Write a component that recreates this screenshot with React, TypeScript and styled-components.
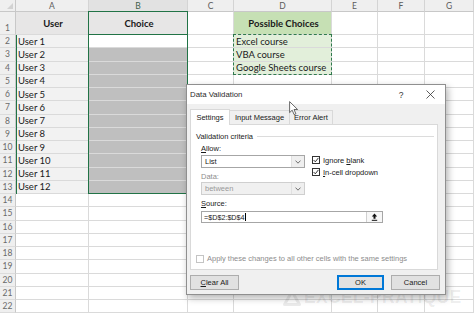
import React from "react";
import styled, { createGlobalStyle, css } from "styled-components";

const GlobalStyle = createGlobalStyle`
  html, body {
    margin: 0;
    padding: 0;
    background: #ffffff;
  }
  body {
    width: 474px;
    height: 316px;
    overflow: hidden;
  }
`;

const COLS = [16, 73, 99, 46, 98, 46, 47, 49];
const LETTERS = ["A", "B", "C", "D", "E", "F", "G"];
const ROW_H = 13.25;
const GRID_ROWS = `12px 23px repeat(21, ${ROW_H}px)`;
const GRID_COLS = COLS.map((c) => `${c}px`).join(" ");

const GREEN = "#217346";

const Screen = styled.div`
  position: relative;
  width: 474px;
  height: 316px;
  overflow: hidden;
  background: #fff;
`;

const SheetStack = styled.div`
  display: grid;
  width: 474px;
  height: 316px;

  & > * {
    grid-area: 1 / 1;
  }
`;

const SheetGrid = styled.div`
  display: grid;
  grid-template-columns: ${GRID_COLS};
  grid-template-rows: ${GRID_ROWS};
  font-family: Lato, "Liberation Sans", sans-serif;
  font-size: 9.5px;
  color: #1a1a1a;
`;

const OverlayGrid = styled.div`
  display: grid;
  grid-template-columns: ${GRID_COLS};
  grid-template-rows: ${GRID_ROWS};
  pointer-events: none;
`;

const Corner = styled.div`
  position: relative;
  background: #efefef;
  border-right: 1px solid #c8c8c8;
  border-bottom: 1px solid #c8c8c8;
  box-sizing: border-box;

  &::after {
    content: "";
    position: absolute;
    right: 2px;
    bottom: 2px;
    border-left: 6px solid transparent;
    border-bottom: 6px solid #d2d2d2;
  }
`;

const ColHead = styled.div<{ $selected?: boolean }>`
  display: flex;
  align-items: center;
  justify-content: center;
  box-sizing: border-box;
  background: ${(p) => (p.$selected ? "#e2e2e2" : "#efefef")};
  border-right: 1px solid #d4d4d4;
  border-bottom: 1px solid #c8c8c8;
  font-size: 8.5px;
  color: ${(p) => (p.$selected ? "#3f5f4a" : "#5c5c5c")};
`;

const RowHead = styled.div<{ $tall?: boolean }>`
  display: flex;
  align-items: ${(p) => (p.$tall ? "flex-end" : "center")};
  justify-content: center;
  box-sizing: border-box;
  padding-bottom: ${(p) => (p.$tall ? "1px" : "0")};
  background: #efefef;
  border-right: 1px solid #c8c8c8;
  border-bottom: 1px solid #dcdcdc;
  font-size: 8.5px;
  color: #6a6a6a;
`;

const Cell = styled.div<{ $bg?: string; $bold?: boolean; $center?: boolean }>`
  display: flex;
  align-items: center;
  justify-content: ${(p) => (p.$center ? "center" : "flex-start")};
  box-sizing: border-box;
  padding-left: 2px;
  background: ${(p) => p.$bg || "#ffffff"};
  border-right: 1px solid #dadada;
  border-bottom: 1px solid #dadada;
  font-weight: ${(p) => (p.$bold ? 700 : 400)};
  white-space: nowrap;
  overflow: hidden;
`;

const Mark = styled.div<{ $col: string; $row: string }>`
  grid-column: ${(p) => p.$col};
  grid-row: ${(p) => p.$row};
  box-sizing: border-box;
`;

const SelectionBox = styled(Mark)`
  border: 1.5px solid ${GREEN};
  margin: -1px 0 0 -1px;
`;

const HeaderRule = styled(Mark)`
  border-bottom: 1px solid ${GREEN};
`;

const RowHeadRule = styled(Mark)`
  border-right: 1.5px solid ${GREEN};
  margin-right: -1px;
`;

const ColHeadRule = styled(Mark)`
  border-bottom: 1.5px solid ${GREEN};
`;

const CopyMarquee = styled(Mark)`
  border: 1.5px dashed #2f7a4c;
  margin: -1px 0 0 -1px;
`;

/* watermark */
const Watermark = styled.div`
  position: absolute;
  left: 283px;
  top: 287px;
  display: flex;
  align-items: center;
  gap: 3px;
  z-index: 2;
  font-family: "Liberation Sans", Arial, sans-serif;
  font-weight: 700;
  font-size: 17.5px;
  letter-spacing: 0.3px;
  color: rgba(0, 0, 0, 0.08);
  pointer-events: none;
`;

/* dialog */
const Dialog = styled.div`
  position: absolute;
  left: 186px;
  top: 84px;
  width: 260px;
  height: 211px;
  box-sizing: border-box;
  display: flex;
  flex-direction: column;
  border: 1px solid #8f8f8f;
  background: #f0f0f0;
  box-shadow: 2px 3px 7px rgba(0, 0, 0, 0.3);
  z-index: 3;
  font-family: "Liberation Sans", Arial, sans-serif;
  font-size: 7.5px;
  color: #1a1a1a;
`;

const TitleBar = styled.div`
  display: flex;
  align-items: center;
  height: 19px;
  padding-left: 3px;
  background: #ffffff;
  font-size: 7.8px;
  color: #2a2a2a;
`;

const TitleButtons = styled.div`
  display: flex;
  align-items: center;
  margin-left: auto;
  gap: 8px;
  height: 100%;
`;

const HelpButton = styled.div`
  width: 12px;
  text-align: center;
  font-size: 8.5px;
  color: #333;
`;

const CloseButton = styled.div`
  display: flex;
  align-items: center;
  justify-content: center;
  width: 30px;
  height: 100%;
`;

const Body = styled.div`
  display: flex;
  flex-direction: column;
  flex: 1;
  padding: 6px 5px 0 3px;
`;

const TabStrip = styled.div`
  display: flex;
  align-items: flex-end;
  height: 14px;
`;

const Tab = styled.div<{ $active?: boolean; $w: number }>`
  position: relative;
  box-sizing: border-box;
  display: flex;
  align-items: center;
  justify-content: center;
  width: ${(p) => p.$w}px;
  height: 14px;
  border: 1px solid #d9d9d9;
  border-bottom: none;
  margin-left: -1px;
  background: #f0f0f0;
  &:first-child {
    margin-left: 0;
  }
  ${(p) =>
    p.$active &&
    css`
      height: 16px;
      margin-bottom: -1px;
      background: #ffffff;
      z-index: 1;
    `}
`;

const Panel = styled.div`
  box-sizing: border-box;
  width: 248px;
  height: 146px;
  display: flex;
  flex-direction: column;
  padding: 6px 0 0 5px;
  border: 1px solid #d9d9d9;
  background: #ffffff;
`;

const GroupHeader = styled.div`
  display: flex;
  align-items: center;
  gap: 4px;
  height: 10px;
  margin-right: 3px;
`;

const GroupRule = styled.div`
  flex: 1;
  height: 1px;
  background: #dcdcdc;
`;

const Criteria = styled.div`
  display: flex;
  flex-direction: column;
  margin-left: 5px;
`;

const CriteriaRow = styled.div`
  display: flex;
`;

const LeftCol = styled.div`
  display: flex;
  flex-direction: column;
  width: 104px;
`;

const Checks = styled.div`
  display: flex;
  flex-direction: column;
  gap: 4px;
  margin: 15px 0 0 7px;
`;

const CheckRow = styled.div<{ $disabled?: boolean }>`
  display: flex;
  align-items: center;
  gap: 3px;
  height: 8px;
  color: ${(p) => (p.$disabled ? "#8d8d8d" : "#1a1a1a")};
  white-space: nowrap;
`;

const Box = styled.div<{ $disabled?: boolean }>`
  box-sizing: border-box;
  display: flex;
  align-items: center;
  justify-content: center;
  width: 8px;
  height: 8px;
  border: 1px solid ${(p) => (p.$disabled ? "#c4c4c4" : "#333")};
  background: #fff;
`;

const Label = styled.div<{ $mt: number; $disabled?: boolean }>`
  height: 9px;
  line-height: 9px;
  margin-top: ${(p) => p.$mt}px;
  color: ${(p) => (p.$disabled ? "#8d8d8d" : "#1a1a1a")};
`;

const Select = styled.div<{ $mt: number; $disabled?: boolean }>`
  box-sizing: border-box;
  display: flex;
  align-items: center;
  height: 13px;
  margin-top: ${(p) => p.$mt}px;
  border: 1px solid ${(p) => (p.$disabled ? "#cfcfcf" : "#a6a6a6")};
  background: ${(p) => (p.$disabled ? "#f0f0f0" : "#ffffff")};
  color: ${(p) => (p.$disabled ? "#9a9a9a" : "#1a1a1a")};
`;

const SelectText = styled.span`
  flex: 1;
  padding-left: 3px;
`;

const SelectArrow = styled.div`
  display: flex;
  align-items: center;
  justify-content: center;
  width: 12px;
  height: 100%;
  background: #efefef;
  border-left: 1px solid #e0e0e0;
`;

const SourceInput = styled.div`
  box-sizing: border-box;
  display: flex;
  align-items: center;
  width: 182px;
  height: 12px;
  margin-top: 3.5px;
  border: 1px solid #a6a6a6;
  background: #fff;
`;

const SourceText = styled.span`
  flex: 1;
  display: flex;
  align-items: center;
  padding-left: 2px;
  font-size: 7.2px;
`;

const Caret = styled.span`
  display: inline-block;
  width: 1px;
  height: 8px;
  margin-left: 0.5px;
  background: #000;
`;

const RangeButton = styled.div`
  display: flex;
  align-items: center;
  justify-content: center;
  width: 15px;
  height: 100%;
  border-left: 1px solid #d0d0d0;
  background: #f7f7f7;
`;

const ApplyRow = styled(CheckRow)`
  margin-top: 31.5px;
`;

const ButtonRow = styled.div`
  display: flex;
  align-items: center;
  margin-top: 5px;
`;

const Button = styled.div<{ $primary?: boolean; $w: number }>`
  box-sizing: border-box;
  display: flex;
  align-items: center;
  justify-content: center;
  width: ${(p) => p.$w}px;
  height: 15px;
  border: 1px solid ${(p) => (p.$primary ? "#0078d7" : "#adadad")};
  box-shadow: ${(p) => (p.$primary ? "inset 0 0 0 1px #0078d7" : "none")};
  background: #e1e1e1;
  & + & {
    margin-left: 7px;
  }
`;

const Spacer = styled.div`
  flex: 1;
`;

const Pointer = styled.svg`
  position: absolute;
  left: 289px;
  top: 101px;
  z-index: 4;
`;

const Check = () => (
  <svg width="6" height="6" viewBox="0 0 6 6">
    <polyline points="0.6,3 2.3,4.8 5.4,0.9" fill="none" stroke="#222" strokeWidth="0.9" />
  </svg>
);

const Chevron = () => (
  <svg width="6" height="4" viewBox="0 0 6 4">
    <polyline points="0.5,0.6 3,3.2 5.5,0.6" fill="none" stroke="#606060" strokeWidth="0.9" />
  </svg>
);

type Row = { cells: { text?: string; bg?: string; bold?: boolean; center?: boolean }[] };

const choices = ["Excel course", "VBA course", "Google Sheets course"];

const rows: Row[] = Array.from({ length: 22 }, (_, i) => {
  const r = i + 1;
  if (r === 1) {
    return {
      cells: [
        { text: "User", bg: "#e7e6e6", bold: true, center: true },
        { text: "Choice", bg: "#e7e6e6", bold: true, center: true },
        {},
        { text: "Possible Choices", bg: "#c6e0b4", bold: true, center: true },
        {},
        {},
        {},
      ],
    };
  }
  const inTable = r <= 13;
  return {
    cells: [
      inTable ? { text: `User ${r - 1}`, bg: "#f2f2f2" } : {},
      inTable ? { bg: r === 2 ? "#ffffff" : "#bfbfbf" } : {},
      {},
      r <= 4 ? { text: choices[r - 2], bg: "#e2efda" } : {},
      {},
      {},
      {},
    ],
  };
});

export default function App() {
  return (
    <Screen>
      <GlobalStyle />
      <SheetStack>
        <SheetGrid>
          <Corner />
          {LETTERS.map((l) => (
            <ColHead key={l} $selected={l === "B"}>
              {l}
            </ColHead>
          ))}
          {rows.map((row, i) => (
            <React.Fragment key={i}>
              <RowHead $tall={i === 0}>{i + 1}</RowHead>
              {row.cells.map((c, j) => (
                <Cell key={j} $bg={c.bg} $bold={c.bold} $center={c.center}>
                  {c.text}
                </Cell>
              ))}
            </React.Fragment>
          ))}
        </SheetGrid>
        <OverlayGrid>
          <ColHeadRule $col="3" $row="1" />
          <RowHeadRule $col="1" $row="3 / 15" />
          <HeaderRule $col="3" $row="2" />
          <SelectionBox $col="3" $row="2 / 15" />
          <CopyMarquee $col="5" $row="3 / 6" />
        </OverlayGrid>
      </SheetStack>

      <Watermark>
        <svg width="18" height="16" viewBox="0 0 18 16">
          <path d="M9 1.5 L16.5 14.5 H1.5 Z" fill="none" stroke="rgba(0,0,0,0.08)" strokeWidth="3" strokeLinejoin="round" />
        </svg>
        EXCEL-PRATIQUE
      </Watermark>

      <Dialog>
        <TitleBar>
          Data Validation
          <TitleButtons>
            <HelpButton>?</HelpButton>
            <CloseButton>
              <svg width="9" height="9" viewBox="0 0 9 9">
                <path d="M0.5 0.5 L8.5 8.5 M8.5 0.5 L0.5 8.5" stroke="#333" strokeWidth="0.8" />
              </svg>
            </CloseButton>
          </TitleButtons>
        </TitleBar>
        <Body>
          <TabStrip>
            <Tab $active $w={40}>Settings</Tab>
            <Tab $w={61}>Input Message</Tab>
            <Tab $w={44}>Error Alert</Tab>
          </TabStrip>
          <Panel>
            <GroupHeader>
              Validation criteria
              <GroupRule />
            </GroupHeader>
            <Criteria>
              <CriteriaRow>
                <LeftCol>
                  <Label $mt={2.5}>
                    <u>A</u>llow:
                  </Label>
                  <Select $mt={2.5}>
                    <SelectText>List</SelectText>
                    <SelectArrow>
                      <Chevron />
                    </SelectArrow>
                  </Select>
                  <Label $mt={3.5} $disabled>
                    Data:
                  </Label>
                  <Select $mt={1.5} $disabled>
                    <SelectText>between</SelectText>
                    <SelectArrow>
                      <Chevron />
                    </SelectArrow>
                  </Select>
                </LeftCol>
                <Checks>
                  <CheckRow>
                    <Box>
                      <Check />
                    </Box>
                    <span>
                      Ignore <u>b</u>lank
                    </span>
                  </CheckRow>
                  <CheckRow>
                    <Box>
                      <Check />
                    </Box>
                    <span>
                      <u>I</u>n-cell dropdown
                    </span>
                  </CheckRow>
                </Checks>
              </CriteriaRow>
              <Label $mt={3.5}>
                <u>S</u>ource:
              </Label>
              <SourceInput>
                <SourceText>
                  =$D$2:$D$4
                  <Caret />
                </SourceText>
                <RangeButton>
                  <svg width="7" height="8" viewBox="0 0 7 8">
                    <path d="M3.5 0.5 L0.8 3.6 H2.5 V5.8 H4.5 V3.6 H6.2 Z" fill="#111" />
                    <rect x="0.8" y="6.8" width="5.4" height="1" fill="#111" />
                  </svg>
                </RangeButton>
              </SourceInput>
            </Criteria>
            <ApplyRow $disabled>
              <Box $disabled />
              <span>Apply these changes to all other cells with the same settings</span>
            </ApplyRow>
          </Panel>
          <ButtonRow>
            <Button $w={49}>
              <span>
                <u>C</u>lear All
              </span>
            </Button>
            <Spacer />
            <Button $primary $w={47}>
              OK
            </Button>
            <Button $w={49}>Cancel</Button>
          </ButtonRow>
        </Body>
      </Dialog>

      <Pointer width="10" height="15" viewBox="0 0 10 15">
        <path
          d="M0.6 0.6 L0.6 11.6 L3.2 9.2 L5.1 13.6 L6.9 12.8 L5 8.5 L8.6 8.5 Z"
          fill="#fff"
          stroke="#444"
          strokeWidth="0.8"
          strokeLinejoin="round"
        />
      </Pointer>
    </Screen>
  );
}
